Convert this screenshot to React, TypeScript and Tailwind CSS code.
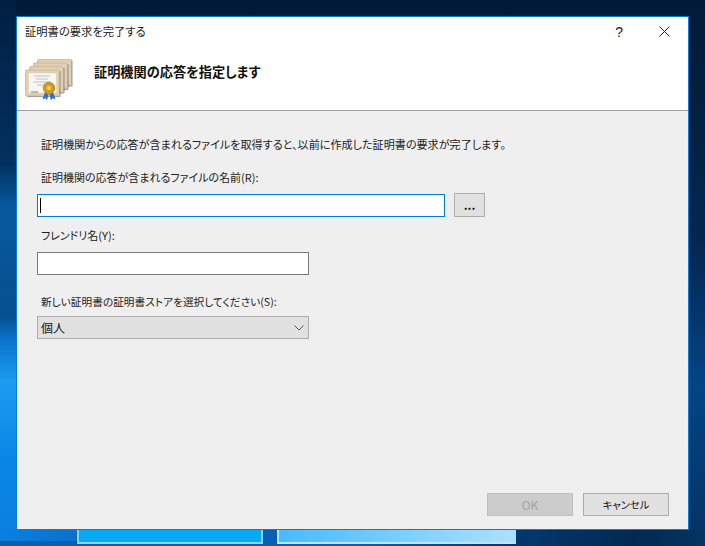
const jp = "font-['Noto_Sans_CJK_JP','Noto_Sans',sans-serif] [font-feature-settings:'palt']";

function CertIcon() {
  const Sheet = ({ x, y }: { x: number; y: number }) => (
    <g>
      <rect x={x} y={y} width="34" height="26" rx="1" fill="#e2cfb0" stroke="#b9a88c" strokeWidth="0.6" />
      <rect x={x + 3} y={y + 3} width="28" height="20" fill="#f8f6f1" stroke="#d8ccb8" strokeWidth="0.4" />
      <path d={`M${x + 2} ${y + 26.6}H${x + 34.6}V${y + 1}`} fill="none" stroke="#3f3f3f" strokeWidth="0.6" opacity="0.75" />
    </g>
  );
  return (
    <svg width="50" height="46" viewBox="0 0 50 46" className="shrink-0">
      <Sheet x={12.5} y={2.5} />
      <Sheet x={8.5} y={6} />
      <Sheet x={4.5} y={9.5} />
      <Sheet x={0.5} y={13} />
      <path d="M9 19h16M11 22h12M8 25h18M12 28h10" stroke="#aab0bd" strokeWidth="0.8" />
      <path d="M6 35h7" stroke="#8f8f8f" strokeWidth="1.2" />
      <path d="M20 35l-2.500 7.500 3-1.200 1.500 2.200 1.500-6zM28 35l2.500 7.500-3-1.200-1.500 2.200-1.500-6z" fill="#2e75c6" />
      <circle cx="24" cy="31" r="5.800" fill="#d69a12" stroke="#a87508" strokeWidth="0.6" />
      <circle cx="24" cy="31" r="2.700" fill="#f0cf64" stroke="#b98610" strokeWidth="0.5" />
    </svg>
  );
}

export default function App() {
  return (
    <div className={`relative h-[546px] w-[705px] overflow-hidden bg-[linear-gradient(180deg,#011a37_0%,#02284f_45%,#044484_70%,#043363_100%)] ${jp}`}>
      {/* wallpaper: left edge */}
      <div className="absolute inset-y-0 left-0 w-[16px] bg-[linear-gradient(180deg,#021f42_0%,#03305f_30%,#07599f_38%,#05508f_58%,#0a72c8_62%,#1c9cf0_70%,#0a86e6_84%,#0a80e0_100%)]" />
      {/* wallpaper: bottom edge */}
      <div className="absolute bottom-0 left-0 right-0 h-[16px] bg-[linear-gradient(90deg,#0a80e0_0%,#0a70cc_11%,#0560b8_38%,#03386e_73%,#012a52_90%,#043363_100%)]" />
      <div className="absolute bottom-0 left-0 h-[5px] w-[516px] bg-[linear-gradient(90deg,#0560b0,#0560b0_70%,#03386e)]" />
      {/* wallpaper: window panes */}
      <div className="absolute left-[77px] top-[526px] h-[18px] w-[186px] border-b-2 border-l-2 border-r-2 border-[#8fd4fb] bg-[#06a8f8]" />
      <div className="absolute left-[277px] top-[526px] h-[18px] w-[239px] border-b-2 border-l-2 border-[#bfe6ff] bg-[linear-gradient(90deg,#45bcfb,#aee0ff)]" />

      <div className="absolute left-[16px] top-[16px] flex h-[514px] w-[673px] flex-col border border-[#0f7ad6] bg-[#efefef]">
        <div className="flex h-[94px] flex-col border-b border-[#a0a0a0] bg-white">
          <div className="flex h-[29px] items-center pl-[8px] text-[11.3px] leading-none text-[#1a1a1a]">
            <span>証明書の要求を完了する</span>
            <span className="ml-auto mr-[36px] font-['Liberation_Sans',sans-serif] text-[14px]">?</span>
            <svg width="11" height="11" viewBox="0 0 11 11" className="mr-[18px]">
              <path d="M.5.5l10 10M10.500.5l-10 10" stroke="#222" strokeWidth="1" fill="none" />
            </svg>
          </div>
          <div className="flex items-start pl-[8px] pt-[11px]">
            <CertIcon />
            <span className="ml-[19px] mt-[5px] text-[13.2px] font-bold leading-[20px] text-[#111]">証明機関の応答を指定します</span>
          </div>
        </div>
        <div className="flex flex-1 flex-col pl-[20px] pr-[19px]">
          <p className="mt-[25px] pl-[4px] text-[11.1px] leading-[16px] text-[#222]">証明機関からの応答が含まれるファイルを取得すると、以前に作成した証明書の要求が完了します。</p>
          <label className="mt-[17px] pl-[4px] text-[11px] leading-[16px] text-[#222]">証明機関の応答が含まれるファイルの名前(R):</label>
          <div className="mt-[8px] flex items-start gap-[9px]">
            <div className="mt-[1px] flex h-[23px] w-[408px] items-center border border-[#0078d7] bg-white pl-[2px]">
              <span className="h-[15px] w-px bg-black" />
            </div>
            <button className="h-[24px] w-[31px] border border-[#adadad] bg-[#e1e1e1] text-[12px] font-bold leading-none text-[#111]">...</button>
          </div>
          <label className="mt-[10px] pl-[4px] text-[11px] leading-[16px] text-[#222]">フレンドリ名(Y):</label>
          <div className="mt-[9px] h-[23px] w-[272px] border border-[#7a7a7a] bg-white" />
          <label className="mt-[19px] pl-[4px] text-[10.7px] leading-[16px] text-[#222]">新しい証明書の証明書ストアを選択してください(S):</label>
          <div className="mt-[6px] flex h-[23px] w-[272px] items-center justify-between border border-[#adadad] bg-[#e1e1e1] pl-[3px] pr-[4px] text-[12px] text-[#111]">
            <span>個人</span>
            <svg width="10" height="6" viewBox="0 0 10 6"><path d="M.5.5L5 5 9.500.5" fill="none" stroke="#555" strokeWidth="1" /></svg>
          </div>
          <div className="mb-[13px] mt-auto flex justify-end gap-[10px]">
            <button className="h-[23px] w-[86px] border border-[#bfbfbf] bg-[#cccccc] text-[12px] text-[#a3a3a3]">OK</button>
            <button className="h-[23px] w-[86px] border border-[#adadad] bg-[#e1e1e1] text-[10.3px] text-[#111]">キャンセル</button>
          </div>
        </div>
      </div>
    </div>
  );
}
